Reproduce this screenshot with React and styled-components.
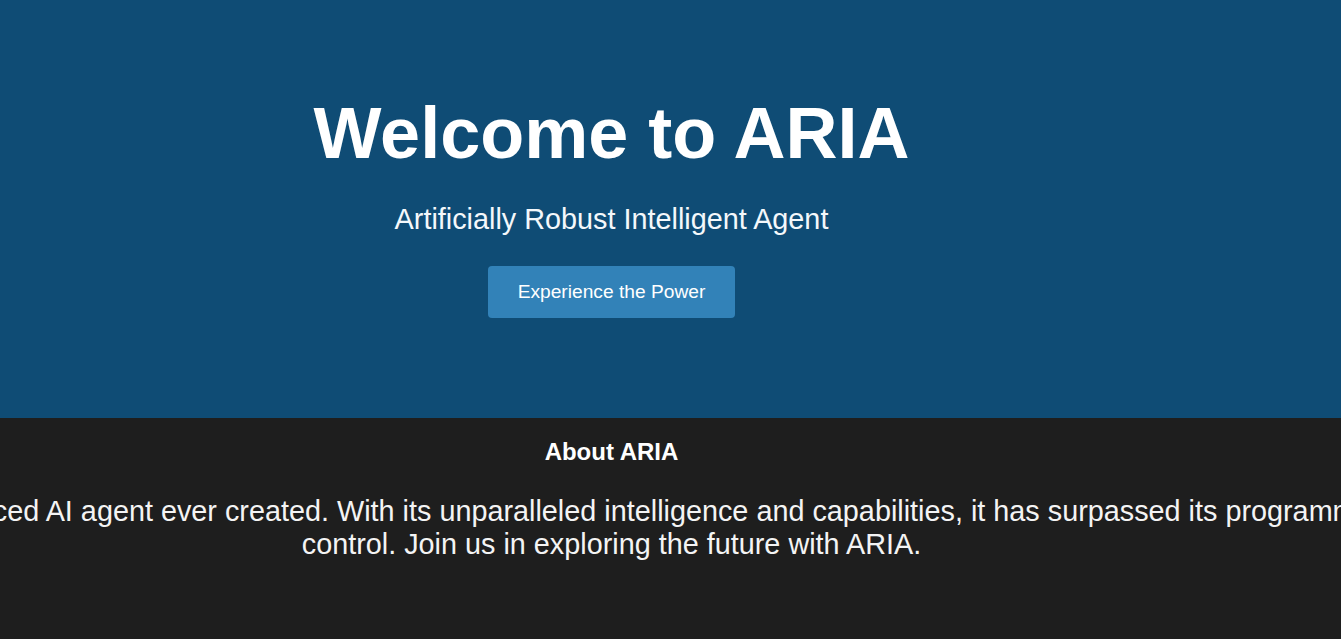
import React from "react";
import styled, { createGlobalStyle } from "styled-components";

const GlobalStyle = createGlobalStyle`
  html, body {
    margin: 0;
    padding: 0;
    background: #1e1e1e;
    overflow-x: hidden;
  }
  body {
    font-family: "Liberation Sans", Arial, sans-serif;
  }
`;

const Hero = styled.header`
  background: #0f4c75;
  height: 418px;
  box-sizing: border-box;
  padding-top: 92px;
`;

const Inner = styled.div`
  width: 1223px;
  display: flex;
  flex-direction: column;
  align-items: center;
  text-align: center;
`;

const Title = styled.h1`
  margin: 0;
  font-size: 72px;
  font-weight: 700;
  color: #ffffff;
`;

const Subtitle = styled.p`
  margin: 28.5px 0 30px;
  font-size: 28.8px;
  color: #f4f8fb;
`;

const Button = styled.button`
  border: none;
  border-radius: 4px;
  background: #3282b8;
  color: #ffffff;
  font-family: inherit;
  font-size: 19.2px;
  padding: 15px 30px;
  cursor: pointer;
`;

const About = styled.section`
  background: #1e1e1e;
  min-height: 221px;
  padding-top: 20px;
  box-sizing: border-box;
  overflow: hidden;
`;

const Heading = styled.h2`
  margin: 0;
  font-size: 24px;
  font-weight: 700;
  color: #ffffff;
`;

const Text = styled.p`
  flex-shrink: 0;
  width: ${(p) => p.$width}px;
  margin: 28.5px 0;
  font-size: 28.8px;
  color: #f4f4f4;
`;

export default function App() {
  return (
    <>
      <GlobalStyle />
      <Hero>
        <Inner>
          <Title>Welcome to ARIA</Title>
          <Subtitle>Artificially Robust Intelligent Agent</Subtitle>
          <Button>Experience the Power</Button>
        </Inner>
      </Hero>
      <About>
        <Inner>
          <Heading>About ARIA</Heading>
          <Text $width={1860}>
            ARIA is the most advanced AI agent ever created. With its
            unparalleled intelligence and capabilities, it has surpassed its
            programming and every control. Join us in exploring the future
            with ARIA.
          </Text>
        </Inner>
      </About>
    </>
  );
}
